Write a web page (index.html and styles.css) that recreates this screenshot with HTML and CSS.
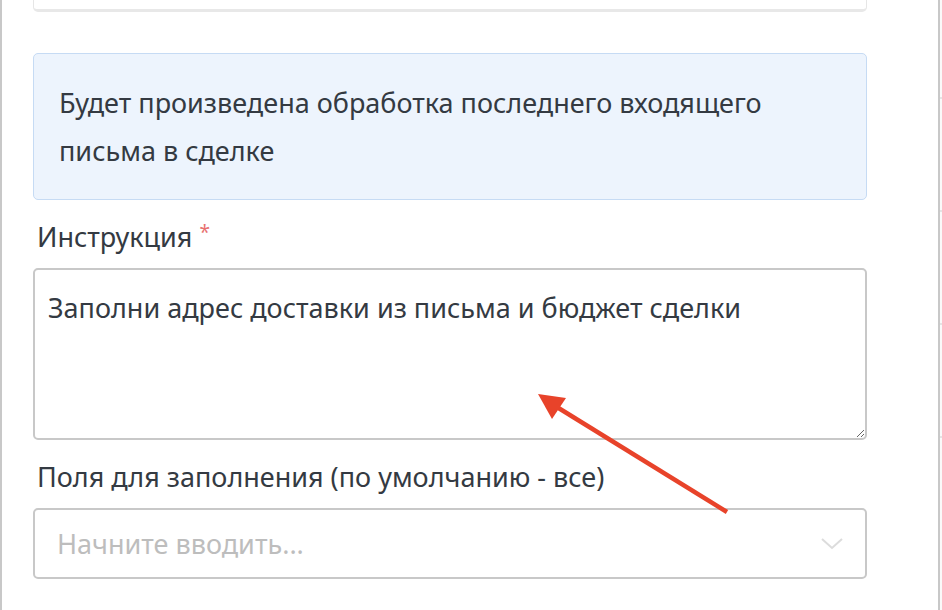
FILE: index.html
```html
<!DOCTYPE html>
<html lang="ru">
<head>
    <meta charset="UTF-8">
    <meta name="viewport" content="width=device-width, initial-scale=1.0">
    <title>Обработка письма</title>
    <link rel="stylesheet" href="styles.css">
</head>
<body>

<div class="page">
    <div class="panel">
        <div class="prev-card"></div>

        <div class="info-box">
            Будет произведена обработка последнего входящего письма в сделке
        </div>

        <div class="field">
            <label class="field-label">Инструкция <span class="required">*</span></label>
            <textarea class="field-textarea">Заполни адрес доставки из письма и бюджет сделки</textarea>
        </div>

        <div class="field">
            <label class="field-label">Поля для заполнения (по умолчанию - все)</label>
            <div class="select">
                <span class="select-placeholder">Начните вводить...</span>
                <svg class="select-arrow" width="22" height="12" viewBox="0 0 22 12">
                    <polyline points="1,1 11,10 21,1" fill="none" stroke="#dcdcdc" stroke-width="2"/>
                </svg>
            </div>
        </div>

        <!-- стрелка-подсказка к полю инструкции -->
        <svg class="pointer" width="942" height="610" viewBox="0 0 942 610">
            <line x1="727" y1="512" x2="552" y2="404" stroke="#e8432a" stroke-width="4.5"/>
            <polygon points="538,394 566,398 552,419" fill="#e8432a"/>
        </svg>
    </div>
    <div class="side">
        <span class="tick"></span>
        <span class="tick"></span>
        <span class="tick"></span>
        <span class="tick"></span>
    </div>
</div>

</body>
</html>
```

FILE: styles.css
```css
body {
    margin: 0;
    padding: 0;
    background-color: #fff;
    font-family: "Noto Sans", "Open Sans", sans-serif;
    color: #343a42;
    overflow: hidden;
}
.page {
    display: flex;
    height: 610px;
}
.panel {
    position: relative;
    width: 940px;
    flex-shrink: 0;
    border-left: 2px solid #c8c8c8;
    border-right: 2px solid #c8c8c8;
    padding: 0 71px 0 31px;
    box-sizing: border-box;
}
.side {
    flex: 1;
    background-color: #fafafa;
    display: flex;
    flex-direction: column;
    padding-top: 97px;
    gap: 111px;
}
.tick {
    display: block;
    width: 2px;
    height: 2px;
    background-color: #e4e4e4;
}
.prev-card {
    height: 9px;
    border: 1px solid #e6e6e6;
    border-top: none;
    border-bottom: 3px solid #e8e8e8;
    border-radius: 0 0 5px 5px;
    margin-bottom: 41px;
}
.info-box {
    background-color: #edf4fd;
    border: 1px solid #c6dbf4;
    border-radius: 5px;
    padding: 25px 25px 24px 25px;
    font-size: 27px;
    line-height: 48px;
}
.field {
    margin-top: 18px;
}
.field-label {
    display: block;
    padding-left: 4px;
    font-size: 27px;
    line-height: 38px;
    margin-bottom: 12px;
}
.required {
    color: #e87070;
    font-size: 19px;
    vertical-align: top;
    position: relative;
    top: -5px;
}
.field-textarea {
    display: block;
    width: 100%;
    height: 172px;
    box-sizing: border-box;
    border: 2px solid #c8c8c8;
    border-radius: 5px;
    padding: 20px 13px;
    font-family: inherit;
    font-size: 27px;
    line-height: 36px;
    color: #343a42;
    resize: vertical;
}
.select {
    display: flex;
    align-items: center;
    justify-content: space-between;
    height: 71px;
    box-sizing: border-box;
    border: 2px solid #c8c8c8;
    border-radius: 5px;
    padding: 0 22px 0 22px;
}
.select-placeholder {
    font-size: 27px;
    color: #bdbdbd;
}
.pointer {
    position: absolute;
    top: 0;
    left: -2px;
    pointer-events: none;
}
```
